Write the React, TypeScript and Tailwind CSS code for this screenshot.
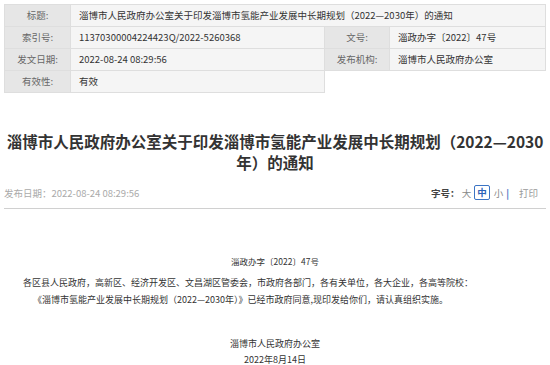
import React from 'react';

const font = { fontFamily: '"Noto Sans CJK SC", "Microsoft YaHei", sans-serif' };

const Label: React.FC<{ children: React.ReactNode }> = ({ children }) => (
  <td className="border border-[#dedede] bg-[#e6e6e6] text-center text-[#666]">{children}</td>
);

const Value: React.FC<{ children: React.ReactNode; span?: number }> = ({ children, span }) => (
  <td colSpan={span} className="border border-[#dedede] bg-[#f5f5f5] pl-[8px] text-[#333]">
    {children}
  </td>
);

export default function App() {
  return (
    <div className="w-[550px] h-[365px] overflow-hidden bg-white px-[4px] pt-[4px]" style={font}>
      <table className="w-[541px] table-fixed border-collapse text-[9.5px] leading-[21px]">
        <colgroup>
          <col className="w-[66px]" />
          <col className="w-[254px]" />
          <col className="w-[65px]" />
          <col className="w-[156px]" />
        </colgroup>
        <tbody>
          <tr>
            <Label>标题:</Label>
            <Value span={3}>淄博市人民政府办公室关于印发淄博市氢能产业发展中长期规划（2022—2030年）的通知</Value>
          </tr>
          <tr>
            <Label>索引号:</Label>
            <Value>11370300004224423Q/2022-5260368</Value>
            <Label>文号:</Label>
            <Value>淄政办字〔2022〕47号</Value>
          </tr>
          <tr>
            <Label>发文日期:</Label>
            <Value>2022-08-24 08:29:56</Value>
            <Label>发布机构:</Label>
            <Value>淄博市人民政府办公室</Value>
          </tr>
          <tr>
            <Label>有效性:</Label>
            <Value>有效</Value>
            <td colSpan={2} className="border-l border-[#dedede]"></td>
          </tr>
        </tbody>
      </table>

      <h1 className="mt-[38px] text-center text-[15.5px] font-bold leading-[21px] text-[#333]">
        <span className="block">淄博市人民政府办公室关于印发淄博市氢能产业发展中长期规划（2022—2030</span>
        <span className="block">年）的通知</span>
      </h1>

      <div className="mt-[12px] flex items-center justify-between border-b border-[#d0d0d0] pb-[8px] text-[9.5px] leading-[14px]">
        <span className="text-[#aaa]">发布日期：2022-08-24 08:29:56</span>
        <div className="flex items-center pr-[8px]">
          <span className="font-bold text-[#444]">字号：</span>
          <span className="ml-[2px] text-[#888]">大</span>
          <span className="ml-[3px] rounded-[2px] border border-[#3b74c4] px-[2px] font-bold leading-[13px] text-[#2a62b8]">中</span>
          <span className="ml-[4px] text-[#888]">小</span>
          <span className="ml-[3px] font-bold text-[#3b74c4]">|</span>
          <span className="ml-[10px] text-[#999]">打印</span>
        </div>
      </div>

      <p className="mt-[46px] text-center text-[8.5px] leading-[12px] text-[#333]">淄政办字〔2022〕47号</p>

      <div className="mt-[7px] text-[9px] leading-[17px] text-[#333]">
        <p className="pl-[19px]">
          各区县人民政府，高新区、经济开发区、文昌湖区管委会，市政府各部门，各有关单位，各大企业，各高等院校：
        </p>
        <p className="pl-[29px]">
          《淄博市氢能产业发展中长期规划（2022—2030年）》已经市政府同意,现印发给你们，请认真组织实施。
        </p>
      </div>

      <div className="mt-[28px] text-center text-[9px] leading-[16px] text-[#333]">
        <p>淄博市人民政府办公室</p>
        <p>2022年8月14日</p>
      </div>
    </div>
  );
}
